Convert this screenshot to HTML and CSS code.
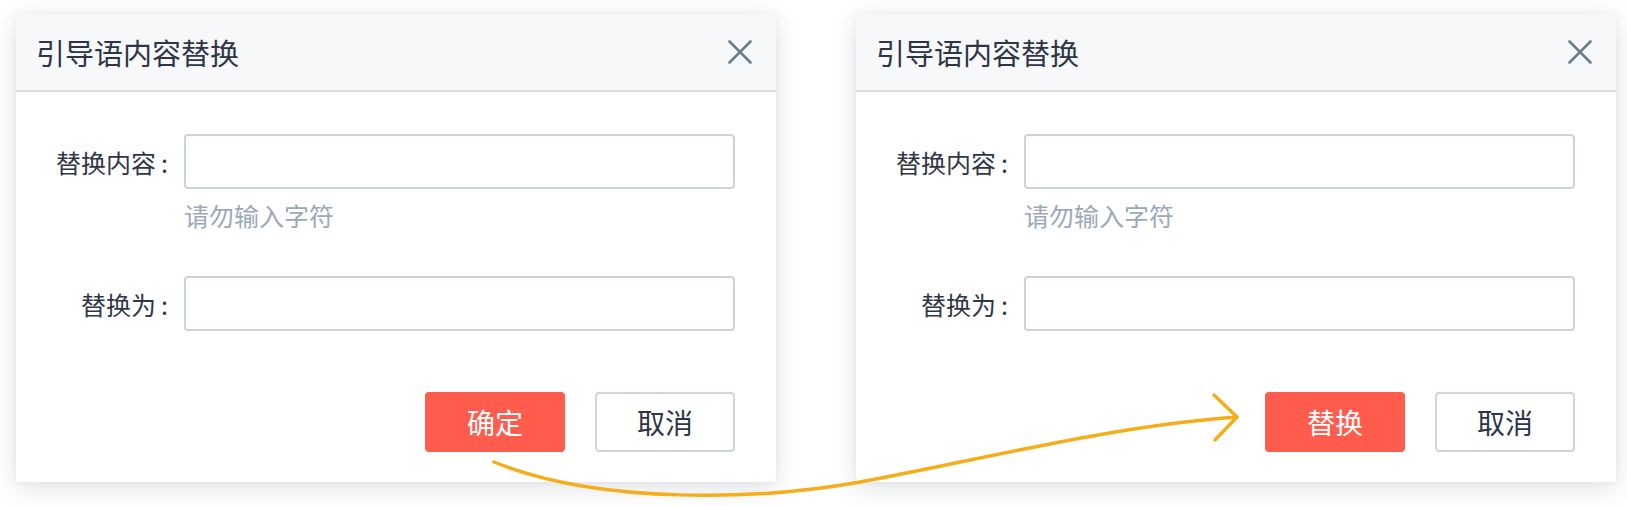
FILE: index.html
```html
<!DOCTYPE html>
<html lang="zh-CN">
<head>
<meta charset="utf-8">
<title>引导语内容替换</title>
<link rel="stylesheet" href="styles.css">
</head>
<body>
<div class="stage">
  <div class="dialog">
    <div class="dialog-header">
      <span class="dialog-title">引导语内容替换</span>
      <svg class="close" viewBox="0 0 24 24" width="24" height="24"><path d="M1.5 1.5 L22.5 22.5 M22.5 1.5 L1.5 22.5" stroke="#6b7d93" stroke-width="2.6" stroke-linecap="round" fill="none"/></svg>
    </div>
    <div class="dialog-body">
      <div class="row">
        <label class="label">替换内容<span class="colon">:</span></label>
        <div class="input"></div>
      </div>
      <div class="hint">请勿输入字符</div>
      <div class="row row-second">
        <label class="label">替换为<span class="colon">:</span></label>
        <div class="input"></div>
      </div>
      <div class="actions">
        <button class="btn btn-primary">确定</button>
        <button class="btn btn-default">取消</button>
      </div>
    </div>
  </div>
  <div class="dialog">
    <div class="dialog-header">
      <span class="dialog-title">引导语内容替换</span>
      <svg class="close" viewBox="0 0 24 24" width="24" height="24"><path d="M1.5 1.5 L22.5 22.5 M22.5 1.5 L1.5 22.5" stroke="#6b7d93" stroke-width="2.6" stroke-linecap="round" fill="none"/></svg>
    </div>
    <div class="dialog-body">
      <div class="row">
        <label class="label">替换内容<span class="colon">:</span></label>
        <div class="input"></div>
      </div>
      <div class="hint">请勿输入字符</div>
      <div class="row row-second">
        <label class="label">替换为<span class="colon">:</span></label>
        <div class="input"></div>
      </div>
      <div class="actions">
        <button class="btn btn-primary">替换</button>
        <button class="btn btn-default">取消</button>
      </div>
    </div>
  </div>
  <svg class="arrow" width="1627" height="506" viewBox="0 0 1627 506">
    <path d="M494 462 C600 505 760 500 860 482 C980 460 1110 426 1237 417" stroke="#f5ad1a" stroke-width="3.5" fill="none" stroke-linecap="round"/>
    <path d="M1214 395 L1237 417 L1215 440" stroke="#f5ad1a" stroke-width="3.5" fill="none" stroke-linecap="round" stroke-linejoin="round"/>
  </svg>
</div>
</body>
</html>
```
FILE: styles.css
```css
* { box-sizing: border-box; }
html, body {
  margin: 0;
  padding: 0;
  background: #ffffff;
  width: 1627px;
  height: 506px;
  overflow: hidden;
  font-family: "Noto Sans CJK SC", "Noto Sans", sans-serif;
}
.stage {
  position: relative;
  display: flex;
  gap: 80px;
  padding: 14px 0 0 16px;
  height: 506px;
}
.dialog {
  width: 760px;
  height: 468px;
  background: #ffffff;
  box-shadow: 0 6px 24px rgba(40, 50, 70, 0.14), 0 0 6px rgba(40, 50, 70, 0.05);
  display: flex;
  flex-direction: column;
}
.dialog-header {
  height: 78px;
  background: #f6f8fa;
  border-bottom: 2px solid #d6dae3;
  display: flex;
  align-items: center;
  justify-content: space-between;
  padding: 0 24px 0 20px;
}
.dialog-title {
  font-size: 29px;
  line-height: 40px;
  color: #2e3546;
}
.close { display: block; }
.dialog-body {
  padding: 42px 41px 30px 0;
  display: flex;
  flex-direction: column;
}
.row {
  display: flex;
  align-items: center;
  gap: 16px;
}
.row-second { margin-top: 43px; }
.label {
  width: 152px;
  text-align: right;
  font-size: 25px;
  line-height: 36px;
  color: #2f3747;
}
.colon {
  margin-left: 5px;
}
.input {
  flex: 1;
  height: 55px;
  border: 2px solid #cdd3de;
  border-radius: 4px;
  background: #ffffff;
}
.hint {
  margin: 8px 0 0 168px;
  font-size: 25px;
  line-height: 36px;
  color: #9ca8b7;
}
.actions {
  margin-top: 61px;
  display: flex;
  justify-content: flex-end;
  gap: 30px;
}
.btn {
  width: 140px;
  height: 60px;
  border-radius: 4px;
  font-family: inherit;
  font-size: 28px;
  padding: 0;
  cursor: pointer;
}
.btn-primary {
  background: #ff5c4d;
  border: none;
  color: #ffffff;
}
.btn-default {
  background: #ffffff;
  border: 2px solid #cfd5df;
  color: #2e3546;
}
.arrow {
  position: absolute;
  left: 0;
  top: 0;
  pointer-events: none;
}
```
